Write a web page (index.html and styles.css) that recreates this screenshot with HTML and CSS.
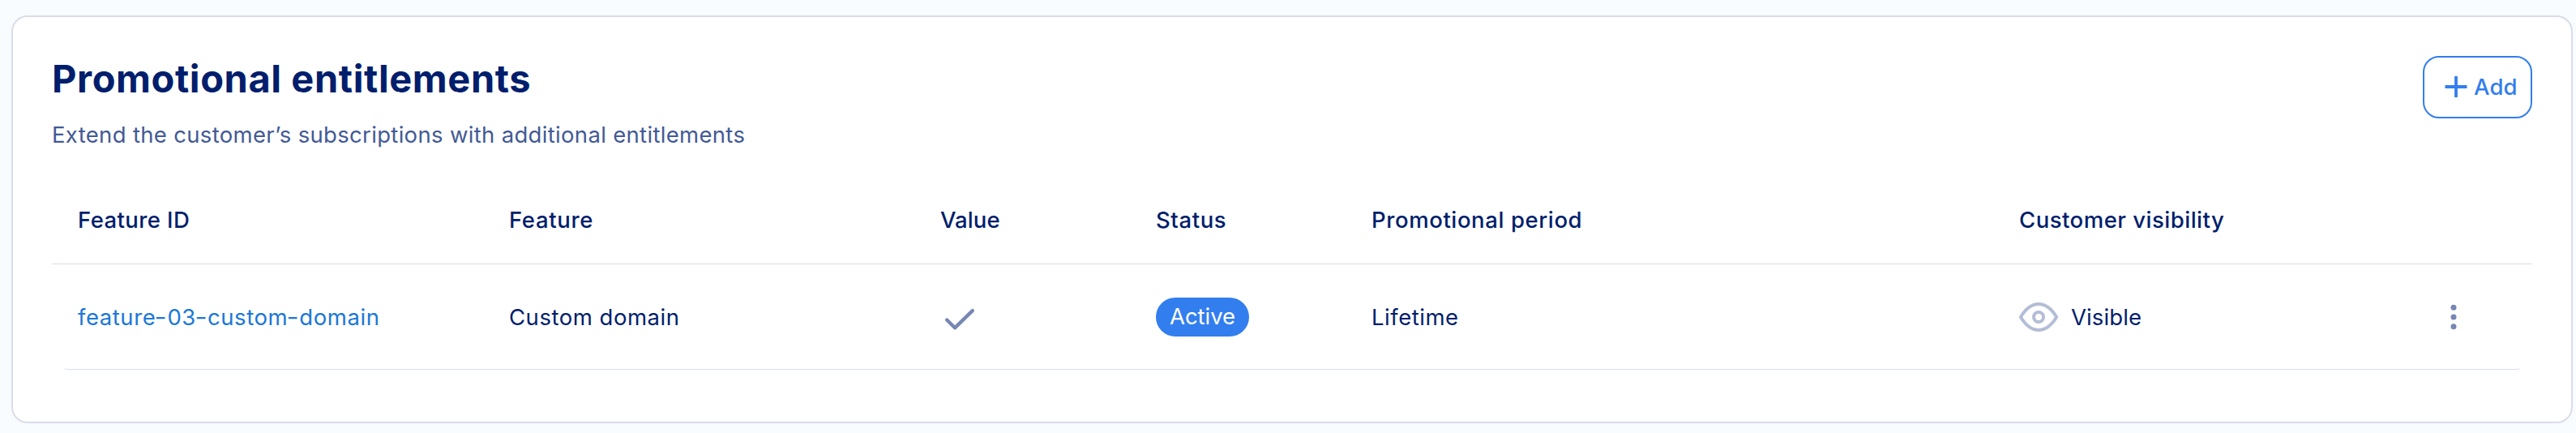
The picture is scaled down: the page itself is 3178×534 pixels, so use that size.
FILE: index.html
```
<!DOCTYPE html>
<html lang="en">
<head>
<meta charset="utf-8">
<title>Promotional entitlements</title>
<link rel="stylesheet" href="styles.css">
</head>
<body>
<section class="card">
  <header class="card-header">
    <div>
      <h2 class="title">Promotional entitlements</h2>
      <p class="subtitle">Extend the customer’s subscriptions with additional entitlements</p>
    </div>
    <button class="add-button" type="button">
      <svg class="plus" width="28" height="28" viewBox="0 0 28 28"><path d="M14 1v26M.5 14h27"/></svg>
      <span>Add</span>
    </button>
  </header>
  <div class="table">
    <div class="row head">
      <div class="id-head">Feature ID</div>
      <div class="feature-head">Feature</div>
      <div class="value-head">Value</div>
      <div class="status-head">Status</div>
      <div class="period-head">Promotional period</div>
      <div class="visibility-head">Customer visibility</div>
      <div></div>
    </div>
    <div class="row item">
      <div><a class="link">feature<i class="dash">-</i>03<i class="dash">-</i>custom<i class="dash">-</i>domain</a></div>
      <div>Custom domain</div>
      <div class="icon-cell"><svg class="check" width="48" height="48" viewBox="0 0 48 48"><path d="M8.200 27.500 18 37.300 39.800 16.200"/></svg></div>
      <div><span class="pill">Active</span></div>
      <div>Lifetime</div>
      <div class="visibility">
        <svg class="eye" width="50" height="40" viewBox="0 0 50 40"><path d="M2.900 20C8 11.500 15.500 4 25 4s17 7.500 22.100 16C42 28.500 34.500 36 25 36S8 28.500 2.900 20Z"/><circle cx="25" cy="20" r="6"/></svg>
        <span>Visible</span>
      </div>
      <div class="icon-cell"><svg class="dots" width="10" height="34" viewBox="0 0 10 34"><circle cx="5" cy="5.300" r="3.500"/><circle cx="5" cy="17" r="3.500"/><circle cx="5" cy="28.700" r="3.500"/></svg></div>
    </div>
  </div>
</section>
</body>
</html>
```
FILE: styles.css
```
* { box-sizing: border-box; }
body {
  margin: 0;
  padding: 19px 4px 12px 14px;
  height: 534px;
  background: #f8fcff;
  color: #001e6c;
  font: 400 27.5px/40px Inter, sans-serif;
  letter-spacing: 0.52px;
}
.card {
  height: 503px;
  padding: 46px 48px 0;
  background: #fff;
  border: 2px solid #dadcea;
  border-radius: 20px;
}
.card-header {
  display: flex;
  justify-content: space-between;
  align-items: flex-start;
}
.title {
  margin: 0 0 19px;
  font-size: 47px;
  line-height: 60px;
  font-weight: 700;
  letter-spacing: 0.6px;
}
.subtitle {
  margin: 0;
  color: #435a95;
  letter-spacing: 0.32px;
}
.add-button {
  display: flex;
  align-items: center;
  gap: 8px;
  width: 135px;
  height: 77px;
  margin: 2px 0 0;
  padding: 0 0 2px 25px;
  background: #fff;
  border: 2px solid #327eee;
  border-radius: 20px;
  color: #327eee;
  font: 500 27.5px/40px Inter, sans-serif;
  letter-spacing: 0.1px;
}
.plus { fill: none; stroke: currentColor; stroke-width: 3.8; }
.table { margin-top: 31px; }
.row {
  display: grid;
  grid-template-columns: 532px 532px 266px 266px 798px 532px 1fr;
  align-items: center;
}
.head {
  height: 109px;
  padding-left: 32px;
  border-bottom: 1px solid #dadcea;
  font-weight: 500;
}
.id-head { letter-spacing: 0.42px; }
.feature-head { letter-spacing: 0.65px; }
.value-head { letter-spacing: 0.1px; }
.status-head,
.period-head { letter-spacing: 0.6px; }
.visibility-head { padding-left: 1px; letter-spacing: 0.5px; }
.item {
  height: 130px;
  margin: 0 15px;
  padding-left: 17px;
  border-bottom: 1px solid #dadcea;
  border-radius: 4px;
}
.link { color: #1b77d8; letter-spacing: 0.56px; }
.dash { display: inline-block; font-style: normal; transform: scaleX(1.2); letter-spacing: 1.5px; }
.icon-cell { display: flex; }
.check { fill: none; stroke: #7687b3; stroke-width: 4.4; stroke-linecap: round; stroke-linejoin: round; }
.pill {
  display: block;
  width: 115px;
  height: 48px;
  border-radius: 24px;
  background: #327eee;
  color: #fff;
  line-height: 47px;
  text-align: center;
  letter-spacing: -0.05px;
}
.visibility { display: flex; align-items: center; gap: 15px; letter-spacing: 0.1px; }
.eye { fill: none; stroke: #b3bdd6; stroke-width: 4; stroke-linejoin: round; }
.dots { fill: #7687b3; }
```
